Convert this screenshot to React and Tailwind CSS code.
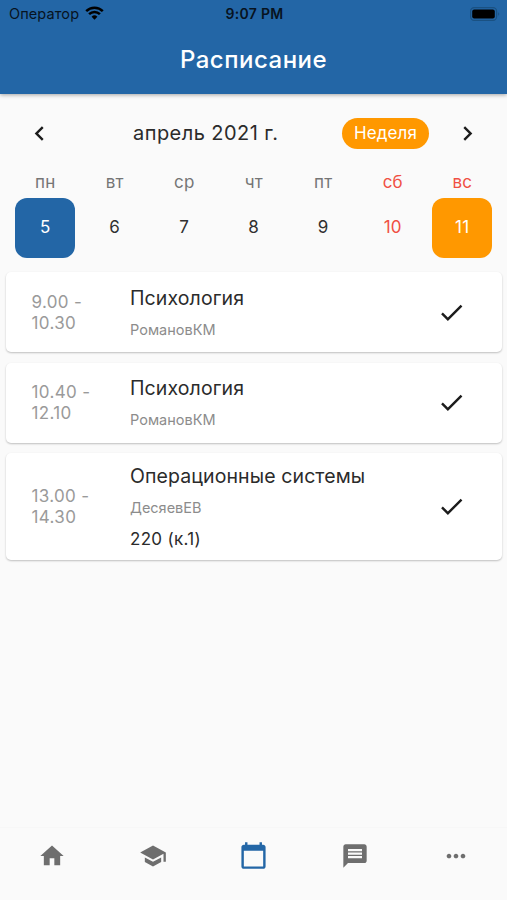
import React from 'react';
import {
  MdHome,
  MdSchool,
  MdCalendarToday,
  MdMessage,
  MdMoreHoriz,
  MdCheck,
  MdChevronLeft,
  MdChevronRight,
} from 'react-icons/md';

const days = [
  { name: 'пн', date: 5, selected: true },
  { name: 'вт', date: 6 },
  { name: 'ср', date: 7 },
  { name: 'чт', date: 8 },
  { name: 'пт', date: 9 },
  { name: 'сб', date: 10, weekend: true },
  { name: 'вс', date: 11, weekend: true, today: true },
];

const lessons = [
  { start: '9.00', end: '10.30', title: 'Психология', teacher: 'РомановКМ' },
  { start: '10.40', end: '12.10', title: 'Психология', teacher: 'РомановКМ' },
  { start: '13.00', end: '14.30', title: 'Операционные системы', teacher: 'ДесяевЕВ', room: '220 (к.1)' },
];

function StatusBar() {
  return (
    <div className="grid grid-cols-3 items-center h-[27px] pl-[9px] pr-[7px] text-[#07131f]">
      <div className="flex items-center gap-[6px]">
        <span className="text-[14.5px] tracking-[0.1px]">Оператор</span>
        <svg className="-mt-px" width="19" height="14" viewBox="0 0 19 14" fill="none" stroke="#000" strokeWidth="2.5">
          <path d="M1.2 5.1a11.7 11.7 0 0 1 16.6 0" />
          <path d="M4.1 8.2a7.6 7.6 0 0 1 10.8 0" />
          <path d="M9.5 13.7 6.6 10.8a4.1 4.1 0 0 1 5.8 0z" fill="#000" stroke="none" />
        </svg>
      </div>
      <span className="text-center text-[14px] font-semibold tracking-[0.3px]">9:07 PM</span>
      <svg className="justify-self-end" width="30" height="14" viewBox="0 0 30 14">
        <rect x="0.6" y="0.6" width="26" height="12.8" rx="3.6" fill="none" stroke="#1a5182" strokeWidth="1.2" />
        <rect x="2.2" y="2.4" width="22.6" height="9.2" rx="2" fill="#000" />
        <path d="M28.2 5.2c1.4.6 1.4 3 0 3.6z" fill="#1a5182" />
      </svg>
    </div>
  );
}

function Day({ day }) {
  let box = 'text-[#303030]';
  if (day.weekend) box = 'text-[#f04f43]';
  if (day.selected) box = 'bg-[#2366a6] text-white';
  if (day.today) box = 'bg-[#ff9800] text-white';

  return (
    <div className="flex flex-col items-center">
      <span className={`h-[31px] leading-[31px] text-[17px] tracking-[0.2px] ${day.weekend ? 'text-[#f04f43]' : 'text-[#757575]'}`}>
        {day.name}
      </span>
      <div className={`flex items-center justify-center w-[60px] h-[60px] rounded-[12px] text-[17px] tracking-[0.3px] ${box}`}>
        {day.date}
      </div>
    </div>
  );
}

function LessonCard({ lesson }) {
  return (
    <div className={`flex items-center bg-white rounded-[5px] pl-[26px] pr-[36px] shadow-[0_1px_2px_rgba(0,0,0,0.24)] ${lesson.room ? 'h-[107px]' : 'h-20'}`}>
      <div className="w-[98.5px] pt-px text-[17px] leading-[21px] tracking-[0.35px] text-[#9a9a9a]">
        {lesson.start} -<br />
        {lesson.end}
      </div>
      <div className={`flex-1 ${lesson.room ? 'pt-[2px]' : 'pt-[3.6px]'}`}>
        <h3 className="text-[19.5px] leading-6 tracking-[0.1px] text-[#2b2b2b]">{lesson.title}</h3>
        <p className="mt-2 text-[14.5px] leading-6 text-[#8c8c8c]">{lesson.teacher}</p>
        {lesson.room && <p className="mt-[7px] text-[17px] leading-6 tracking-[0.3px] text-[#2b2b2b]">{lesson.room}</p>}
      </div>
      <MdCheck className="text-[29px] text-[#1c1c1c]" />
    </div>
  );
}

export default function App() {
  return (
    <div className="flex flex-col w-[507px] h-[900px] bg-[#fafafa] font-['Inter','Roboto',sans-serif] overflow-hidden">
      <header className="h-[94px] bg-[#2366a6] shadow-[0_1px_4px_rgba(0,0,0,0.35)]">
        <StatusBar />
        <h1 className="h-[66px] leading-[66px] text-center text-[24px] font-medium tracking-[0.5px] text-white">Расписание</h1>
      </header>

      {/* Month switcher */}
      <div className="flex items-center h-[78px] px-[25px]">
        <MdChevronLeft className="text-[29px] text-[#1c1c1c]" />
        <div className="ml-[79px] w-[209px] text-[20px] tracking-[0.45px] text-[#2b2b2b] whitespace-nowrap">апрель 2021 г.</div>
        <button className="flex items-center justify-center w-[87px] h-[31px] pt-px rounded-full bg-[#ff9800] text-[17px] tracking-[0.1px] text-white">
          Неделя
        </button>
        <MdChevronRight className="ml-auto text-[29px] text-[#1c1c1c]" />
      </div>

      <div className="grid grid-cols-7 pl-[10.5px] pr-[10px] -mt-[5.5px]">
        {days.map((day) => (
          <Day key={day.date} day={day} />
        ))}
      </div>

      <main className="flex-1 flex flex-col gap-[10.5px] pt-[14.5px] px-[5.5px]">
        {lessons.map((lesson) => (
          <LessonCard key={lesson.start} lesson={lesson} />
        ))}
      </main>

      <nav className="grid grid-cols-5 h-[73px] pt-[14px] pl-px border-t border-[#f7f7f7] justify-items-center text-[#6e6e6e] text-[28px]">
        <MdHome />
        <MdSchool />
        <MdCalendarToday className="-mt-px text-[29px] text-[#2366a6]" />
        <MdMessage />
        <MdMoreHoriz />
      </nav>
    </div>
  );
}
